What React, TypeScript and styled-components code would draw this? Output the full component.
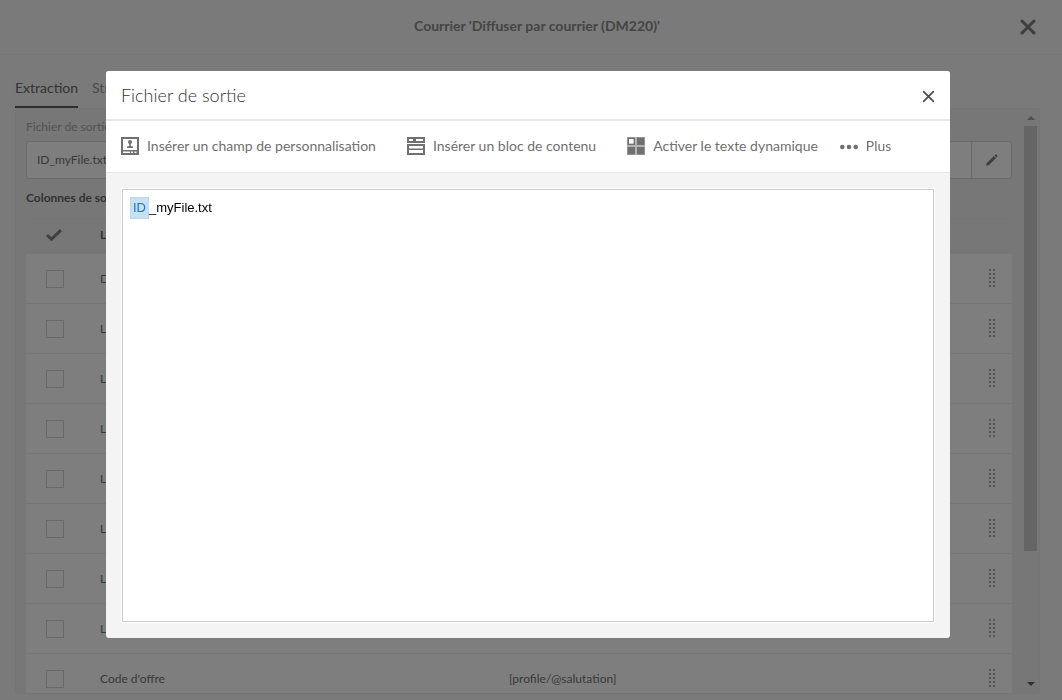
import React from "react";
import styled, { createGlobalStyle } from "styled-components";

const Global = createGlobalStyle`
  *, *::before, *::after { box-sizing: border-box; }
  body {
    margin: 0;
    background: #f4f4f4;
    color: #747474;
    font: 12px/18px Lato, "Open Sans", sans-serif;
  }
  button, input { font: inherit; color: inherit; }
`;

const PlainButton = styled.button`
  display: flex;
  align-items: center;
  justify-content: center;
  padding: 0;
  border: 0;
  background: none;
  cursor: pointer;
`;

/* ---------- Page behind the dialog ---------- */

const Page = styled.div`
  display: flex;
  flex-direction: column;
  height: 100vh;
  overflow: hidden;
`;

const PageHeader = styled.header`
  display: grid;
  grid-template-columns: 1fr auto 1fr;
  align-items: center;
  height: 55px;
  padding: 0 26px 0 38px;
  border-bottom: 1px solid #eeeeee;
`;

const PageTitle = styled.h1`
  grid-column: 2;
  margin: 0;
  padding-bottom: 2px;
  font-size: 14px;
  line-height: 18px;
  font-weight: 700;
  color: #8a8a8a;
`;

const PageClose = styled(PlainButton)`
  justify-self: end;
  color: #7c7c7c;
`;

const Tabs = styled.nav`
  display: flex;
  gap: 14px;
  margin-top: 15px;
  padding-left: 15px;
`;

const Tab = styled.a<{ $active?: boolean }>`
  height: 38px;
  padding-top: 9px;
  border-bottom: 2px solid ${(p) => (p.$active ? "#5c5c5c" : "transparent")};
  color: ${(p) => (p.$active ? "#686868" : "#959595")};
  font-size: 14px;
  line-height: 18px;
  text-decoration: none;
`;

const Panel = styled.main`
  display: flex;
  flex: 1;
  min-height: 0;
  margin: 0 22px 6px 15px;
  border: 1px solid #eaeaea;
  border-radius: 0 0 3px 3px;
  background: #eeeeee;
`;

const PanelContent = styled.div`
  flex: 1;
  min-width: 0;
  overflow: hidden;
  padding: 9px 12px 0 10px;
`;

const FieldLabel = styled.label`
  display: block;
  margin-bottom: 5px;
  color: #a6a6a6;
`;

const FieldGroup = styled.div`
  display: flex;
  height: 38px;
  border: 1px solid #d4d4d4;
  border-radius: 3px;
  background: #fcfcfc;
`;

const FieldInput = styled.input`
  flex: 1;
  min-width: 0;
  padding: 0 10px;
  border: 0;
  background: none;
  color: #747474;
`;

const EditButton = styled(PlainButton)`
  width: 40px;
  border-left: 1px solid #d4d4d4;
  color: #7c7c7c;
`;

const SectionTitle = styled.h2`
  margin: 10px 0 11px;
  font-size: 12px;
  line-height: 18px;
  font-weight: 700;
  color: #666666;
`;

const Table = styled.table`
  width: 100%;
  border-collapse: separate;
  border-spacing: 0;
  table-layout: fixed;
`;

const HeadCell = styled.th<{ $width?: number }>`
  height: 36px;
  padding: 0 0 4px;
  width: ${(p) => (p.$width ? `${p.$width}px` : "auto")};
  border-top: 1px solid #eaeaea;
  text-align: left;
  font-weight: 700;
  color: #666666;

  svg {
    display: block;
    margin-left: 20px;
  }
`;

const Cell = styled.td`
  height: 50px;
  padding: 0;
  background: #fcfcfc;
  border-bottom: 1px solid #ececec;
`;

const Checkbox = styled.input`
  display: block;
  appearance: none;
  width: 18px;
  height: 18px;
  margin: 0 0 0 20px;
  border: 1px solid #d2d2d2;
`;

const Handle = styled(PlainButton)`
  width: 100%;
  padding-bottom: 2px;
  color: #a8a8a8;
`;

const ScrollTrack = styled.div`
  display: flex;
  flex-direction: column;
  align-items: center;
  justify-content: space-between;
  width: 13px;
  margin-right: 2px;
  padding: 7px 0;
`;

const ScrollThumb = styled.div`
  width: 100%;
  flex: 425 0 0;
  margin-top: 6px;
  background: #cacaca;
`;

const ScrollRest = styled.div`
  flex: 131 0 0;
`;

/* ---------- Dialog ---------- */

const Backdrop = styled.div`
  position: fixed;
  inset: 0;
  display: flex;
  padding: 71px 112px 62px 106px;
  background: rgba(0, 0, 0, 0.5);
`;

const Dialog = styled.section`
  display: flex;
  flex: 1;
  flex-direction: column;
  min-width: 0;
  overflow: hidden;
  border-radius: 3px;
  background: #f4f4f4;
`;

const DialogHeader = styled.header`
  display: flex;
  align-items: center;
  justify-content: space-between;
  height: 50px;
  padding: 0 15px;
  border-bottom: 2px solid #e8e8e8;
  background: #ffffff;
`;

const DialogTitle = styled.h2`
  margin: 0;
  font-size: 18px;
  line-height: 24px;
  font-weight: 300;
  color: #323232;
`;

const DialogClose = styled(PlainButton)`
  padding-top: 2px;
  color: #4b4b4b;
`;

const Toolbar = styled.div`
  display: flex;
  align-items: center;
  gap: 22px;
  height: 52px;
  padding: 0 15px 2px;
  border-bottom: 1px solid #e6e6e6;
  background: #ffffff;
`;

const ToolGroup = styled.div`
  display: flex;
  gap: 31px;
`;

const ToolButton = styled(PlainButton)`
  gap: 8px;
  color: #707070;
  font-size: 14px;
  line-height: 18px;
  white-space: nowrap;
`;

const EditorArea = styled.div`
  display: flex;
  flex: 1;
  padding: 16px;
`;

const Editor = styled.div`
  flex: 1;
  padding: 7px;
  border: 1px solid #cccccc;
  outline: 1px solid #ffffff;
  background: #ffffff;
  color: #000000;
  font: 13px/20px "Liberation Sans", Arial, sans-serif;
`;

const FieldToken = styled.span`
  display: inline-block;
  padding: 0 2px;
  border: 1px solid #c0d8ee;
  background: #c8e0f6;
  color: #1473e6;
`;

/* ---------- Icons ---------- */

const Cross = ({ size, weight }: { size: number; weight: number }) => (
  <svg width={size} height={size} viewBox="0 0 16 16" stroke="currentColor" strokeWidth={weight} strokeLinecap="round" aria-hidden="true">
    <path d="M2 2 14 14M14 2 2 14" />
  </svg>
);

const PersonIcon = () => (
  <svg width="18" height="18" viewBox="0 0 18 18" fill="currentColor" aria-hidden="true">
    <path fillRule="evenodd" d="M0 0h18v18H0zM2 2v11h14V2zM2 14.500v1.500h7v-1.500zM10 14.500v1.500h2v-1.500zM13.500 14.500v1.500h2v-1.500z" />
    <circle cx="9" cy="5" r="2" />
    <path d="M8.200 6h1.600v3l2.200.6V11H6V9.600l2.200-.6z" />
  </svg>
);

const BlockIcon = () => (
  <svg width="18" height="18" viewBox="0 0 18 18" fill="currentColor" aria-hidden="true">
    <path fillRule="evenodd" d="M0 0h18v6H0zM2 2v2h4V2zM9 2v2h7V2z" />
    <path d="M7 2h1v2H7z" />
    <path fillRule="evenodd" d="M0 7h18v11H0zM2 9v2.500h14V9zM2 13v3h14v-3z" />
  </svg>
);

const DynamicIcon = () => (
  <svg width="18" height="18" viewBox="0 0 18 18" aria-hidden="true">
    <path fill="#b4b4b4" d="M0 0h18v18H0z" />
    <path fill="currentColor" fillRule="evenodd" d="M.5.5h7.500V8H.5zM2 2v4.500h4.500V2z" />
    <path fill="#fff" d="M2 2h4.500v4.500H2z" />
    <path fill="currentColor" d="M10 .5h7.500V8H10zM.5 10H8v7.500H.5zM10 10h7.500v7.500H10z" />
  </svg>
);

const MoreIcon = () => (
  <svg width="18" height="18" viewBox="0 0 18 18" fill="currentColor" aria-hidden="true">
    <circle cx="2.300" cy="10" r="2.300" />
    <circle cx="9" cy="10" r="2.300" />
    <circle cx="15.700" cy="10" r="2.300" />
  </svg>
);

const PencilIcon = () => (
  <svg width="12" height="12" viewBox="0 0 12 12" fill="currentColor" aria-hidden="true">
    <path d="M0 12 .9 9 7.900 2l2.100 2.100L3 11.100zM8.500 1.400 9.400.5q.4-.4.8 0l1.300 1.300q.4.4 0 .8l-.9.900z" />
  </svg>
);

const CheckIcon = () => (
  <svg width="16" height="12" viewBox="0 0 16 12" fill="none" stroke="#808080" strokeWidth="3" aria-hidden="true">
    <path d="M1 6 5.500 10.200 15 1.200" />
  </svg>
);

const dotRows = [0, 4, 8, 12, 16];

const GripIcon = () => (
  <svg width="6" height="18" viewBox="0 0 6 18" fill="currentColor" shapeRendering="crispEdges" aria-hidden="true">
    {dotRows.map((y) => (
      <path key={y} d={`M0 ${y}h2v2H0zM4 ${y}h2v2H4z`} />
    ))}
  </svg>
);

const Arrow = ({ down }: { down?: boolean }) => (
  <svg width="8" height="4" viewBox="0 0 8 4" fill={down ? "#606060" : "#9c9c9c"} aria-hidden="true">
    <path d={down ? "M0 0h8L4 4z" : "M0 4h8L4 0z"} />
  </svg>
);

const columns = [
  { label: "Date", value: "" },
  { label: "Ligne 1", value: "" },
  { label: "Ligne 2", value: "" },
  { label: "Ligne 3", value: "" },
  { label: "Ligne 4", value: "" },
  { label: "Ligne 5", value: "" },
  { label: "Ligne 6", value: "" },
  { label: "Ligne 7", value: "" },
  { label: "Code d'offre", value: "[profile/@salutation]" },
];

export default function App() {
  return (
    <>
      <Global />
      <Page>
        <PageHeader>
          <PageTitle>Courrier 'Diffuser par courrier (DM220)'</PageTitle>
          <PageClose aria-label="Fermer le courrier">
            <Cross size={16} weight={3} />
          </PageClose>
        </PageHeader>
        <Tabs>
          <Tab href="#extraction" $active>Extraction</Tab>
          <Tab href="#structure">Structure</Tab>
        </Tabs>
        <Panel>
          <PanelContent>
            <FieldLabel htmlFor="output-file">Fichier de sortie</FieldLabel>
            <FieldGroup>
              <FieldInput id="output-file" defaultValue="ID_myFile.txt" />
              <EditButton aria-label="Modifier">
                <PencilIcon />
              </EditButton>
            </FieldGroup>
            <SectionTitle>Colonnes de sortie</SectionTitle>
            <Table>
              <thead>
                <tr>
                  <HeadCell $width={74}><CheckIcon /></HeadCell>
                  <HeadCell $width={409}>Libellé</HeadCell>
                  <HeadCell />
                  <HeadCell $width={40} />
                </tr>
              </thead>
              <tbody>
                {columns.map((c) => (
                  <tr key={c.label}>
                    <Cell><Checkbox type="checkbox" aria-label={c.label} /></Cell>
                    <Cell>{c.label}</Cell>
                    <Cell>{c.value}</Cell>
                    <Cell>
                      <Handle aria-label={`Déplacer ${c.label}`}><GripIcon /></Handle>
                    </Cell>
                  </tr>
                ))}
              </tbody>
            </Table>
          </PanelContent>
          <ScrollTrack>
            <Arrow />
            <ScrollThumb />
            <ScrollRest />
            <Arrow down />
          </ScrollTrack>
        </Panel>
      </Page>

      <Backdrop>
        <Dialog role="dialog" aria-modal="true" aria-labelledby="dialog-title">
          <DialogHeader>
            <DialogTitle id="dialog-title">Fichier de sortie</DialogTitle>
            <DialogClose aria-label="Fermer">
              <Cross size={13} weight={2} />
            </DialogClose>
          </DialogHeader>
          <Toolbar role="toolbar">
            <ToolGroup>
              <ToolButton><PersonIcon />Insérer un champ de personnalisation</ToolButton>
              <ToolButton><BlockIcon />Insérer un bloc de contenu</ToolButton>
              <ToolButton><DynamicIcon />Activer le texte dynamique</ToolButton>
            </ToolGroup>
            <ToolButton><MoreIcon />Plus</ToolButton>
          </Toolbar>
          <EditorArea>
            <Editor contentEditable suppressContentEditableWarning role="textbox" aria-label="Fichier de sortie">
              <FieldToken>ID</FieldToken>_myFile.txt
            </Editor>
          </EditorArea>
        </Dialog>
      </Backdrop>
    </>
  );
}
